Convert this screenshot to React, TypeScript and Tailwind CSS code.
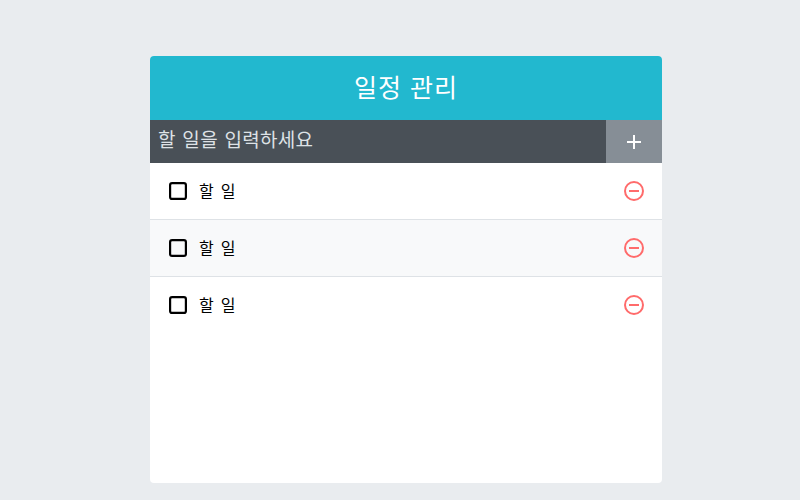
function Row({ shaded, border }: { shaded?: boolean; border?: boolean }) {
  return (
    <div className={`flex h-[57px] items-center border-b pl-[19px] pr-[18px] ${shaded ? "bg-[#f8f9fa]" : "bg-white"} ${border ? "border-[#dee2e6]" : "border-transparent"}`}>
      <svg width="18" height="18" viewBox="0 0 18 18" className="shrink-0">
        <rect x="1.1" y="1.1" width="15.8" height="15.8" rx="2" fill="none" stroke="#000" strokeWidth="2.2" />
      </svg>
      <span className="ml-[12px] pt-[2px] text-[16px] tracking-[1.3px] text-black">할 일</span>
      <svg width="20" height="20" viewBox="0 0 20 20" className="ml-auto">
        <circle cx="10" cy="10" r="9" fill="none" stroke="#ff6b6b" strokeWidth="2" />
        <line x1="5" y1="10" x2="15" y2="10" stroke="#ff6b6b" strokeWidth="2" />
      </svg>
    </div>
  );
}

export default function App() {
  return (
    <div className="flex h-[500px] w-[800px] overflow-hidden bg-[#e9ecef] pl-[150px] pt-14 [font-family:'Liberation_Sans','Noto_Sans_CJK_KR',sans-serif]">
      <div className="flex h-[427px] w-[512px] flex-col overflow-hidden rounded bg-white">
        <div className="flex h-16 items-center justify-center bg-[#22b8cf] pt-[2px] text-[25px] tracking-[1px] text-white">일정 관리</div>
        <div className="flex h-[43px] bg-[#495057]">
          <div className="flex-1 pl-2 text-[19px] leading-[42px] tracking-[0.3px] [word-spacing:1px] text-[#dee2e6]">할 일을 입력하세요</div>
          <div className="flex w-14 items-center justify-center bg-[#868e96] text-white">
            <svg width="16" height="16" viewBox="0 0 16 16" className="mt-[1px]">
              <path d="M8 1v14M1 8h14" stroke="#fff" strokeWidth="2" fill="none" />
            </svg>
          </div>
        </div>
        <Row border />
        <Row shaded border />
        <Row />
      </div>
    </div>
  );
}
